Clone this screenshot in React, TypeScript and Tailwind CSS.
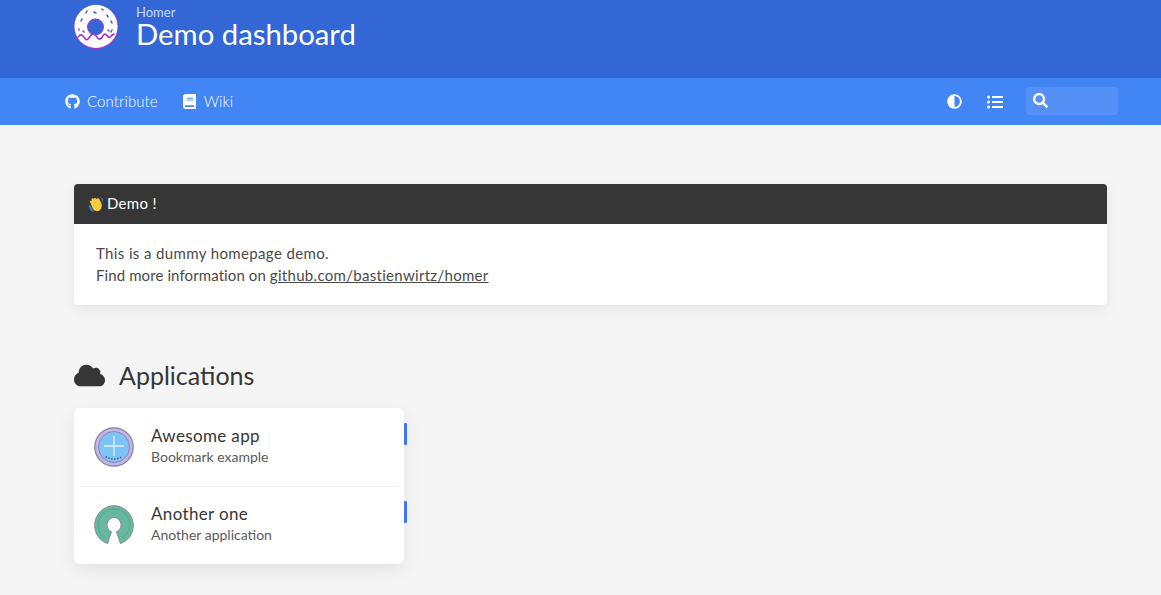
import React from 'react';
import { FaAdjust, FaBook, FaCloud, FaGithub, FaListUl, FaSearch } from 'react-icons/fa';

const body = { fontFamily: '"Lato", "Open Sans", sans-serif' };

const Donut = () => (
  <svg viewBox="0 0 46 46" className="w-[46px] h-[46px]">
    <circle cx="23" cy="23" r="22" fill="#c026d3" />
    <circle cx="23" cy="22.4" r="21.6" fill="#ffffff" />
    <path d="M5 33c2-2 3-3 5-1s3 5 5 3 3-6 6-5 3 6 6 5 3-5 5-5 3 5 5 3 2-2 4-3" fill="none" stroke="#a02fd8" strokeWidth="1.6" strokeLinecap="round" />
    <circle cx="22.500" cy="23" r="8.500" fill="#6f4fd0" />
    <circle cx="22.500" cy="23" r="6.600" fill="#3367d6" />
    <g stroke="#4a55b8" strokeWidth="1.5" strokeLinecap="round">
      <path d="M14 7l-1 2M29 5l1 1M34 11l1 2M9 15l-1 2M38 17l1 2M6 25l0 1M21 8l2 1M39 26l-1 2M10 27l1 1M35 26l1 1" />
    </g>
  </svg>
);

const Wave = () => (
  <svg viewBox="0 0 16 16" className="w-4 h-4 mr-[3px]">
    <path d="M0.5 10l2.5 5 3 1-4-7z" fill="#3b82c4" />
    <path d="M12 0.5l3 2.5v4l-1.5-4z" fill="#3b82c4" />
    <path d="M2 6c-.5-1.5 1-2 2-1L3.500 3.500c0-1.500 1.500-1.500 2-.5C6 1.500 8 1.500 8.500 3c1-1 2.500-1 3 .5l2 4c1 3.500-.5 6.500-3 7.500-3 .5-5-.5-6-3z" fill="#f7c93e" />
  </svg>
);

const PlusIcon = () => (
  <svg viewBox="0 0 40 40" className="w-10 h-10">
    <circle cx="20" cy="20" r="19.200" fill="#c3b4e2" stroke="#85809f" strokeWidth="1.200" />
    <circle cx="20" cy="20" r="15.500" fill="#7cc4f5" stroke="#8d86bd" strokeWidth="1" />
    <path d="M20 9v20M10 19h20" stroke="#dcf0fc" strokeWidth="1.400" />
    <path d="M11.500 29.500q8.500 5 17 0" fill="none" stroke="#5d5a8c" strokeWidth="1.600" strokeDasharray="1.500 1.500" />
  </svg>
);

const OpenSourceIcon = () => (
  <svg viewBox="0 0 40 40" className="w-10 h-10">
    <path d="M13.500 38.500C6 36 .7 29 .7 20.500.7 9.500 9.500.7 20 .7s19.300 8.800 19.300 19.800c0 8.500-5.300 15.500-12.800 18l-4-11.700c2.500-1 4.500-3.500 4.500-6.800 0-4-3.200-7.500-7-7.500s-7 3.500-7 7.500c0 3.300 2 5.800 4.500 6.800z" fill="#68b8a0" stroke="#808c8c" strokeWidth="1" />
    <path d="M12 33C7 30 4 25 4 20 4 11 11 4 20 4s16 7 16 16c0 5-3 10-8 13" fill="none" stroke="#559c88" strokeWidth="0.800" />
  </svg>
);

const apps = [
  { name: 'Awesome app', sub: 'Bookmark example', icon: <PlusIcon /> },
  { name: 'Another one', sub: 'Another application', icon: <OpenSourceIcon /> },
];

export default function App() {
  return (
    <div className="h-[595px] overflow-hidden bg-[#f5f5f5] text-[#4a4a4a]" style={body}>
      <header className="h-[78px] bg-[#3367d6] pl-[73px] flex items-start">
        <div className="pt-[4px] w-[63px]">
          <Donut />
        </div>
        <div className="pt-[5px] text-white">
          <p className="text-[13px] leading-[15px] text-[#c8d8f8]">Homer</p>
          <h1 className="text-[29.300px] leading-[28px] font-normal">Demo dashboard</h1>
        </div>
      </header>

      <nav className="h-[47px] bg-[#4285f4] pl-[65px] pr-[43px] flex items-center text-white text-[15px] font-light tracking-[0.1px]">
        <a className="flex items-center gap-[7px] mr-[25px]">
          <FaGithub className="w-[15px] h-[15px]" />
          <span>Contribute</span>
        </a>
        <a className="flex items-center gap-[8px]">
          <FaBook className="w-[13px] h-[15px]" />
          <span>Wiki</span>
        </a>
        <div className="ml-auto flex items-center">
          <FaAdjust className="w-[15px] h-[15px] mr-[25px]" />
          <FaListUl className="w-[16px] h-[16px] mr-[23px]" />
          <div className="w-[92px] h-[28px] mb-[2px] rounded-[4px] bg-[#5490f5] flex items-center pl-[7px]">
            <FaSearch className="w-[15px] h-[15px]" />
          </div>
        </div>
      </nav>

      <main className="pl-[74px] pr-[54px] pt-[59px]">
        <section className="rounded-[4px] overflow-hidden bg-white shadow-[0_4px_14px_rgba(0,0,0,0.07)]">
          <div className="h-[40px] bg-[#363636] text-white text-[15px] tracking-[0.3px] flex items-center pl-[14px] pb-[1px]">
            <Wave />
            <span>Demo !</span>
          </div>
          <div className="h-[81px] pl-[22px] pt-[18px] text-[15px] leading-[22px]">
            <p className="tracking-[0.37px]">This is a dummy homepage demo.</p>
            <p className="tracking-[0.1px]">
              Find more information on <a className="underline tracking-[0.3px]">github.com/bastienwirtz/homer</a>
            </p>
          </div>
        </section>

        <h2 className="mt-[54px] flex items-center text-[25px] leading-[32px] text-[#363636]">
          <FaCloud className="w-[31px] h-[25px] mr-[14px]" />
          Applications
        </h2>

        <div className="mt-[17px] w-[330px] rounded-[6px] bg-white shadow-[0_6px_18px_rgba(0,0,0,0.08)]">
          {apps.map((app, i) => (
            <div key={app.name} className="relative h-[78px] flex items-center pl-[20px]">
              {i > 0 && <div className="absolute left-[6px] right-[6px] top-0 h-px bg-[#f3f3f3]" />}
              {app.icon}
              <div className="ml-[17px] mb-[2px]">
                <p className="text-[17px] leading-[20px] tracking-[0.35px] mb-[2px] text-[#363636]">{app.name}</p>
                <p className="text-[14px] leading-[18px] text-[#5a5a5a]">{app.sub}</p>
              </div>
              <div className="absolute right-[-3px] top-[15px] w-[3px] h-[22px] rounded-[1px] bg-[#3b78f0]" />
            </div>
          ))}
        </div>
      </main>
    </div>
  );
}
